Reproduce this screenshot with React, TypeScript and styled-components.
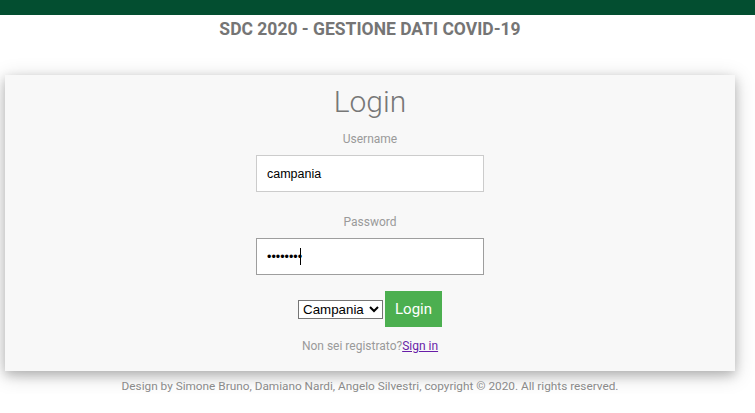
import React from "react";
import styled, { createGlobalStyle } from "styled-components";

const Global = createGlobalStyle`
  html, body { margin: 0; padding: 0; background: #ffffff; }
  body { font-family: Roboto, "Liberation Sans", Arial, sans-serif; }
  * { box-sizing: border-box; }
`;

const Page = styled.div`
  width: 755px;
  display: flex;
  flex-direction: column;
`;

const TopBar = styled.div`
  height: 15px;
  background: #034e30;
`;

const Main = styled.div`
  width: 740px;
  display: flex;
  flex-direction: column;
  align-items: center;
`;

const Title = styled.h1`
  margin: 0;
  font-size: 17.5px;
  line-height: 28px;
  font-weight: 700;
  color: #757575;
  text-align: center;
`;

const Card = styled.form`
  align-self: stretch;
  margin: 32px 5px 0;
  padding: 9px 0 17px;
  background: #f8f8f8;
  box-shadow: 0 4px 10px 0 rgba(0, 0, 0, 0.2), 0 4px 20px 0 rgba(0, 0, 0, 0.19);
  display: flex;
  flex-direction: column;
  align-items: center;
`;

const Heading = styled.h2`
  margin: 0;
  font-size: 30px;
  line-height: 36px;
  font-weight: 300;
  color: #777777;
`;

const Label = styled.label<{ $top: number }>`
  margin-top: ${(p) => p.$top}px;
  font-size: 12px;
  line-height: 16px;
  color: #9a9a9a;
`;

const FieldWrap = styled.div`
  position: relative;
  margin-top: 8px;
`;

const Input = styled.input<{ $dark?: boolean }>`
  display: block;
  width: 228px;
  height: 37px;
  padding: 0 10px;
  border: 1px solid ${(p) => (p.$dark ? "#9e9e9e" : "#cccccc")};
  background: #ffffff;
  font-family: "Liberation Sans", Arial, sans-serif;
  font-size: 12.5px;
  color: #000;
  outline: none;
`;

const Caret = styled.span`
  position: absolute;
  left: 44px;
  top: 10px;
  width: 1px;
  height: 17px;
  background: #000;
`;

const ActionRow = styled.div`
  margin-top: 16px;
  display: flex;
  align-items: center;
  gap: 2px;
`;

const Select = styled.select`
  font-family: "Liberation Sans", Arial, sans-serif;
  font-size: 13.333px;
  height: 19px;
  color: #000;
  background: #fff;
  border: 1px solid #767676;
  border-radius: 0;
`;

const LoginButton = styled.button`
  height: 36px;
  padding: 0 10px;
  border: none;
  background: #4caf50;
  color: #ffffff;
  font-family: Roboto, sans-serif;
  font-size: 15px;
  cursor: pointer;
`;

const Register = styled.div`
  margin-top: 11px;
  font-size: 12px;
  line-height: 16px;
  color: #9a9a9a;
`;

const SignIn = styled.a`
  color: #681da8;
  text-decoration: underline;
`;

const Footer = styled.div`
  margin-top: 7px;
  font-size: 11.8px;
  line-height: 16px;
  color: #8a8a8a;
  text-align: center;
`;

export default function App() {
  return (
    <Page>
      <Global />
      <TopBar />
      <Main>
        <Title>SDC 2020 - GESTIONE DATI COVID-19</Title>
        <Card onSubmit={(e) => e.preventDefault()}>
          <Heading>Login</Heading>
          <Label $top={11}>Username</Label>
          <FieldWrap>
            <Input type="text" defaultValue="campania" />
          </FieldWrap>
          <Label $top={22}>Password</Label>
          <FieldWrap>
            <Input type="password" defaultValue="campania" $dark />
            <Caret />
          </FieldWrap>
          <ActionRow>
            <Select defaultValue="Campania">
              <option>Campania</option>
              <option>Lazio</option>
              <option>Lombardia</option>
            </Select>
            <LoginButton type="submit">Login</LoginButton>
          </ActionRow>
          <Register>
            Non sei registrato?<SignIn href="#">Sign in</SignIn>
          </Register>
        </Card>
        <Footer>
          Design by Simone Bruno, Damiano Nardi, Angelo Silvestri, copyright © 2020. All rights reserved.
        </Footer>
      </Main>
    </Page>
  );
}
